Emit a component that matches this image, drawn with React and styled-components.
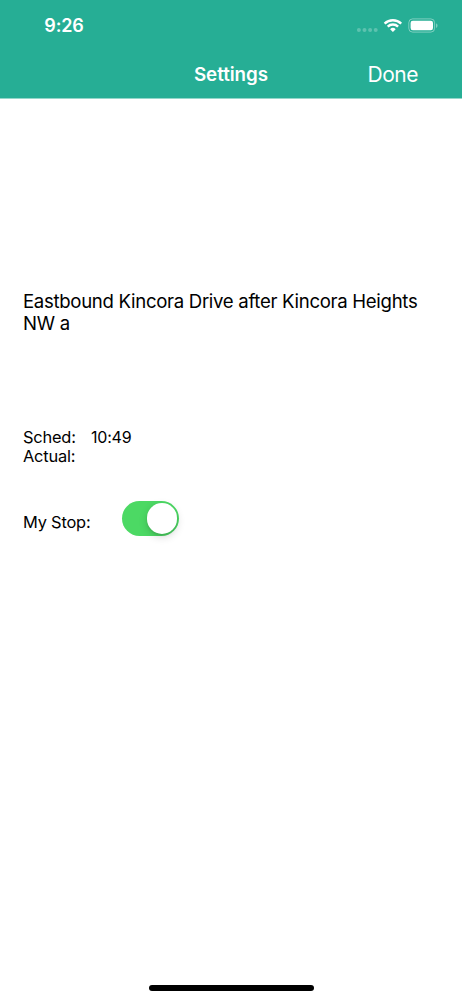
import React, { useState } from 'react';
import styled, { createGlobalStyle } from 'styled-components';

const GlobalStyle = createGlobalStyle`
    body {
        margin: 0;
        background-color: #ffffff;
    }
`;

const Screen = styled.div`
    display: flex;
    flex-direction: column;
    box-sizing: border-box;
    width: 462px;
    height: 1000px;
    overflow: hidden;
    background-color: #ffffff;
    color: #000000;
    font-family: Inter, 'Liberation Sans', sans-serif;
    white-space: nowrap;
`;

const Header = styled.header`
    height: 98px;
    flex-shrink: 0;
    box-sizing: border-box;
    background-color: #26ae95;
    box-shadow: 0 1px 0 #93d7ca;
    color: #ffffff;
`;

const StatusBar = styled.div`
    display: flex;
    justify-content: space-between;
    align-items: center;
    height: 52px;
    padding: 0 24px 0 44.3px;
`;

const Clock = styled.div`
    font-size: 18px;
    font-weight: 600;
    line-height: 22px;
    letter-spacing: -0.15px;
`;

const StatusIcons = styled.svg`
    display: block;
    width: 82px;
    height: 20px;
`;

const NavBar = styled.div`
    display: grid;
    grid-template-columns: 1fr auto 1fr;
    align-items: start;
    height: 46px;
    padding: 10px 44px 0;
    box-sizing: border-box;
`;

const Title = styled.div`
    grid-column: 2;
    font-size: 18.8px;
    font-weight: 600;
    line-height: 26px;
    letter-spacing: -0.05px;
`;

const DoneButton = styled.button`
    justify-self: end;
    padding: 0;
    border: none;
    background: none;
    color: #ffffff;
    font-family: inherit;
    font-size: 21px;
    line-height: 25px;
    letter-spacing: -0.5px;
    cursor: pointer;
`;

const Content = styled.main`
    flex: 1;
    padding: 192px 23px 0;
`;

const StopName = styled.div`
    height: 137px;
    font-size: 18.6px;
    line-height: 22.4px;
    letter-spacing: -0.31px;
    white-space: normal;
`;

const InfoRow = styled.div`
    display: flex;
    height: 19.4px;
    font-size: 16.4px;
    line-height: 20px;
    letter-spacing: -0.2px;
`;

const Label = styled.div`
    width: ${({ $width }) => $width}px;
`;

const Value = styled.div`
    font-size: 16px;
`;

const StopRow = styled.div`
    display: flex;
    align-items: center;
    height: 35px;
    margin-top: 35.2px;
    font-size: 16.4px;
    line-height: 20px;
    letter-spacing: -0.2px;
    ${Label} {
        padding-top: 7px;
    }
`;

const Switch = styled.button`
    display: flex;
    justify-content: ${({ $on }) => ($on ? 'flex-end' : 'flex-start')};
    align-items: center;
    box-sizing: border-box;
    width: 57px;
    height: 35px;
    padding: 2px;
    border: none;
    border-radius: 18px;
    background-color: ${({ $on }) => ($on ? '#4cd964' : '#e5e5ea')};
    cursor: pointer;
`;

const Thumb = styled.span`
    width: 30.5px;
    height: 30.5px;
    border-radius: 50%;
    background-color: #ffffff;
    box-shadow: 0 3px 8px rgba(0, 0, 0, 0.16), 0 2px 2px rgba(0, 0, 0, 0.08);
`;

const HomeIndicator = styled.div`
    align-self: center;
    width: 165px;
    height: 6px;
    margin-bottom: 9px;
    border-radius: 3px;
    background-color: #000000;
`;

function SystemStatus() {
    return (
        <StatusIcons viewBox="0 0 82 20" fill="#ffffff">
            <g opacity="0.25">
                <circle cx="2.9" cy="13.9" r="2" />
                <circle cx="8.5" cy="13.9" r="2" />
                <circle cx="14.1" cy="13.9" r="2" />
                <circle cx="19.7" cy="13.9" r="2" />
            </g>
            <g fill="none" stroke="#ffffff" strokeWidth="2.4">
                <path d="M28.6 7.6A12 12 0 0 1 45.2 7.6" />
                <path d="M31.7 10.7A7.4 7.4 0 0 1 42.1 10.7" />
            </g>
            <path d="M36.9 16L34.1 13.2A4 4 0 0 1 39.7 13.2Z" />
            <rect x="52.8" y="2.9" width="25.8" height="13.2" rx="3.8" fill="none" stroke="#ffffff" strokeOpacity="0.4" />
            <rect x="54.6" y="4.7" width="22.4" height="9.6" rx="2.2" />
            <path d="M80.1 7.2C82 8.1 82 11 80.1 11.9Z" opacity="0.45" />
        </StatusIcons>
    );
}

function App() {
    const [myStop, setMyStop] = useState(true);
    return (
        <>
            <GlobalStyle />
            <Screen>
                <Header>
                    <StatusBar>
                        <Clock>9:26</Clock>
                        <SystemStatus />
                    </StatusBar>
                    <NavBar>
                        <Title>Settings</Title>
                        <DoneButton>Done</DoneButton>
                    </NavBar>
                </Header>
                <Content>
                    <StopName>Eastbound Kincora Drive after Kincora Heights NW a</StopName>
                    <InfoRow>
                        <Label $width={68}>Sched:</Label>
                        <Value>10:49</Value>
                    </InfoRow>
                    <InfoRow>
                        <Label $width={68}>Actual:</Label>
                    </InfoRow>
                    <StopRow>
                        <Label $width={99}>My Stop:</Label>
                        <Switch
                            role="switch"
                            aria-checked={myStop}
                            aria-label="My Stop"
                            $on={myStop}
                            onClick={() => setMyStop(!myStop)}
                        >
                            <Thumb />
                        </Switch>
                    </StopRow>
                </Content>
                <HomeIndicator />
            </Screen>
        </>
    );
}

export default App;
